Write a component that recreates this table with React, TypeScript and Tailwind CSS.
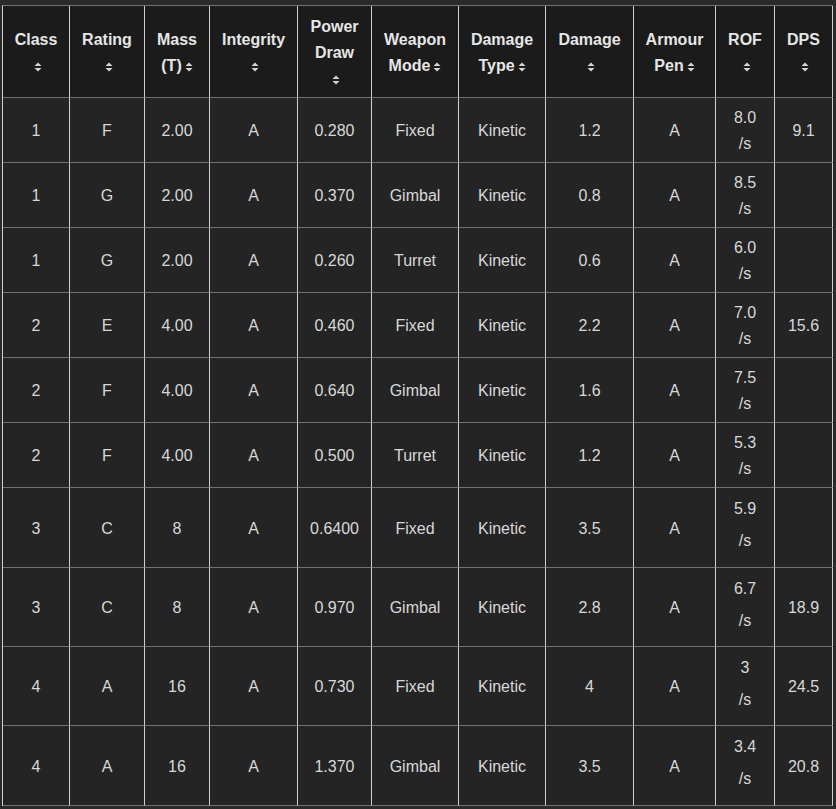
import React from "react";

const Sort = () => (
  <svg width="8" height="10" viewBox="0 0 8 10" className="inline-block ml-[3px] align-[-1px]">
    <polygon points="4,0.5 7.5,4 0.5,4" fill="#d6d6d6" />
    <polygon points="0.5,6 7.5,6 4,9.5" fill="#d6d6d6" />
  </svg>
);

type H = { lines: string[]; iconOwnLine: boolean };
const headers: H[] = [
  { lines: ["Class"], iconOwnLine: true },
  { lines: ["Rating"], iconOwnLine: true },
  { lines: ["Mass", "(T)"], iconOwnLine: false },
  { lines: ["Integrity"], iconOwnLine: true },
  { lines: ["Power", "Draw"], iconOwnLine: true },
  { lines: ["Weapon", "Mode"], iconOwnLine: false },
  { lines: ["Damage", "Type"], iconOwnLine: false },
  { lines: ["Damage"], iconOwnLine: true },
  { lines: ["Armour", "Pen"], iconOwnLine: false },
  { lines: ["ROF"], iconOwnLine: true },
  { lines: ["DPS"], iconOwnLine: true },
];

const rows: { c: string[]; rof: string; dps: string; tall: boolean; h: string }[] = [
  { c: ["1", "F", "2.00", "A", "0.280", "Fixed", "Kinetic", "1.2", "A"], rof: "8.0", dps: "9.1", tall: false, h: "h-[65px]" },
  { c: ["1", "G", "2.00", "A", "0.370", "Gimbal", "Kinetic", "0.8", "A"], rof: "8.5", dps: "", tall: false, h: "h-[65px]" },
  { c: ["1", "G", "2.00", "A", "0.260", "Turret", "Kinetic", "0.6", "A"], rof: "6.0", dps: "", tall: false, h: "h-[65px]" },
  { c: ["2", "E", "4.00", "A", "0.460", "Fixed", "Kinetic", "2.2", "A"], rof: "7.0", dps: "15.6", tall: false, h: "h-[65px]" },
  { c: ["2", "F", "4.00", "A", "0.640", "Gimbal", "Kinetic", "1.6", "A"], rof: "7.5", dps: "", tall: false, h: "h-[65px]" },
  { c: ["2", "F", "4.00", "A", "0.500", "Turret", "Kinetic", "1.2", "A"], rof: "5.3", dps: "", tall: false, h: "h-[65px]" },
  { c: ["3", "C", "8", "A", "0.6400", "Fixed", "Kinetic", "3.5", "A"], rof: "5.9", dps: "", tall: true, h: "h-[80px]" },
  { c: ["3", "C", "8", "A", "0.970", "Gimbal", "Kinetic", "2.8", "A"], rof: "6.7", dps: "18.9", tall: true, h: "h-[79px]" },
  { c: ["4", "A", "16", "A", "0.730", "Fixed", "Kinetic", "4", "A"], rof: "3", dps: "24.5", tall: true, h: "h-[79px]" },
  { c: ["4", "A", "16", "A", "1.370", "Gimbal", "Kinetic", "3.5", "A"], rof: "3.4", dps: "20.8", tall: true, h: "h-[80px]" },
];

export default function App() {
  return (
    <div
      className="w-[836px] h-[809px] bg-[#2a2a2a] pt-[5px] pl-[2px] overflow-hidden"
      style={{ fontFamily: '"Liberation Sans", Arial, sans-serif' }}
    >
      <div className="grid grid-cols-[67px_75px_65px_88px_74px_87px_87px_88px_82px_59px_58px] w-[831px] border-l border-l-[#cfcfcf] border-t border-t-[#707070]">
        {headers.map((h, i) => (
          <div
            key={i}
            className="h-[92px] pt-[3px] bg-[#1b1b1b] border-r border-r-[#cfcfcf] border-b border-b-[#707070] flex flex-col items-center justify-center text-center text-[16px] leading-[26px] font-bold text-[#e6e6e6]"
          >
            {h.lines.map((l, j) => (
              <div key={j}>
                {l}
                {!h.iconOwnLine && j === h.lines.length - 1 ? <Sort /> : null}
              </div>
            ))}
            {h.iconOwnLine ? (
              <div>
                <Sort />
              </div>
            ) : null}
          </div>
        ))}
        {rows.map((r, ri) => (
          <React.Fragment key={ri}>
            {r.c.map((v, ci) => (
              <div
                key={ci}
                className={`${r.h} pt-[2px] bg-[#242424] border-r border-r-[#cfcfcf] border-b border-b-[#707070] flex items-center justify-center text-[16px] text-[#d8d8d8]`}
              >
                {v}
              </div>
            ))}
            <div
              className={`${r.h} bg-[#242424] border-r border-r-[#cfcfcf] border-b border-b-[#707070] flex flex-col items-center justify-center text-[16px] text-[#d8d8d8] ${r.tall ? "leading-[32px] pb-[5px]" : "leading-[26px] pt-[2px]"}`}
            >
              <div>{r.rof}</div>
              <div>/s</div>
            </div>
            <div
              className={`${r.h} pt-[2px] bg-[#242424] border-r border-r-[#cfcfcf] border-b border-b-[#707070] flex items-center justify-center text-[16px] text-[#d8d8d8]`}
            >
              {r.dps}
            </div>
          </React.Fragment>
        ))}
      </div>
    </div>
  );
}
